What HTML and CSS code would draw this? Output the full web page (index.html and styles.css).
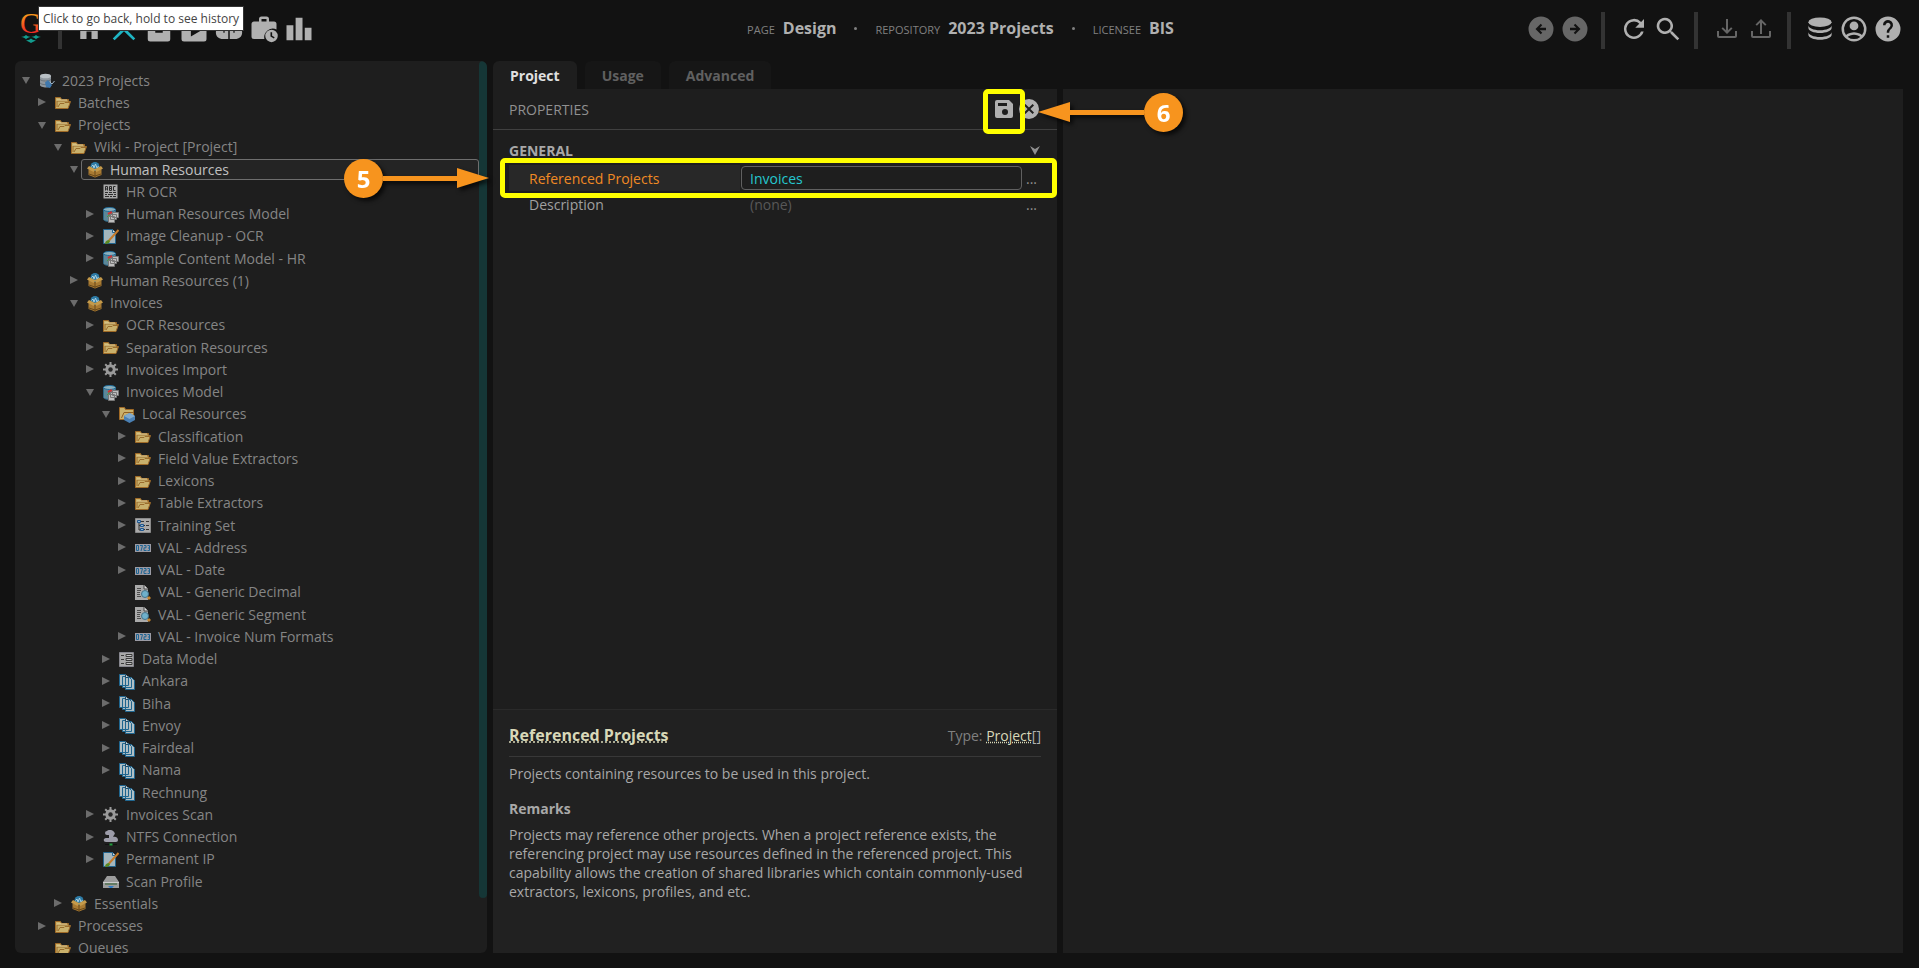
FILE: index.html
```html
<!DOCTYPE html>
<html lang="en">
<head>
  <meta charset="UTF-8">
  <title>Design - 2023 Projects</title>
  <link rel="stylesheet" href="styles.css">
</head>
<body>
  <!-- icon sprite -->
  <svg class="sprite" aria-hidden="true">
    <defs>
      <linearGradient id="logo-fill" x1="0" y1="0" x2="0" y2="1">
        <stop offset="0.2" stop-color="#f9a01b"/>
        <stop offset="0.8" stop-color="#ee2a24"/>
      </linearGradient>
    </defs>

    <!-- toolbar -->
    <symbol id="i-home" viewBox="0 0 24 24"><path d="M10 20v-6h4v6h5v-8h3L12 3 2 12h3v8z"/></symbol>
    <symbol id="i-design" viewBox="0 0 24 24"><path d="M4.500 21 3 19.500 10.500 12 3 4.500 5 3l7 7.300L19 3l2 1.500-7.500 7.500 7.500 7.500-1.500 1.500L12 13.700z"/></symbol>
    <symbol id="i-archive" viewBox="0 0 24 24"><path d="M2.500 3h19v4h-19zM3 8h18v12a2 2 0 0 1-2 2H5a2 2 0 0 1-2-2zM9 11v4h6v-4z" fill-rule="evenodd"/></symbol>
    <symbol id="i-play" viewBox="0 0 24 24"><path d="M4 5h4V2h8v3h4a2 2 0 0 1 2 2v13a2 2 0 0 1-2 2H4a2 2 0 0 1-2-2V7a2 2 0 0 1 2-2zm6-1v1h4V4zM9.500 9v9l7.500-4.500z" fill-rule="evenodd"/></symbol>
    <symbol id="i-brain" viewBox="0 0 24 24"><path d="M11.400 3v17H7c-3 0-5.500-2-5.500-5 0-1 0-1 .5-2-1-4 2-6 3-6 1-3 4-4 6.400-4zm1.200 0v17H17c3 0 5.500-2 5.500-5 0-1 0-1-.5-2 1-4-2-6-3-6-1-3-4-4-6.400-4z"/><path d="M8 12v3M16 12v3" stroke="#121212"/></symbol>
    <symbol id="i-case" viewBox="0 0 24 24"><path d="M8 4a2 2 0 0 1 2-2h4a2 2 0 0 1 2 2v2h4a2 2 0 0 1 2 2v4.300A7 7 0 0 0 12.300 20H4a2 2 0 0 1-2-2V8c0-1.100.9-2 2-2h4zm2 0v2h4V4z" fill-rule="evenodd"/><path d="M18 12.500a5 5 0 1 0 0 10 5 5 0 0 0 0-10zm-.8 2h1.300v2.800l2 1.200-.6 1-2.700-1.600z" fill-rule="evenodd"/></symbol>
    <symbol id="i-bars" viewBox="0 0 24 24"><path d="M2 9h5.500v12H2zM9.300 3h5.500v18H9.300zM16.600 11H22v10h-5.400z"/></symbol>
    <symbol id="i-back" viewBox="0 0 24 24"><path d="M12 2a10 10 0 1 0 0 20 10 10 0 0 0 0-20zm4 11H11l2 2-1.200 1.200L7.600 12l4.200-4.200L13 9l-2 2h5z" fill-rule="evenodd"/></symbol>
    <symbol id="i-forward" viewBox="0 0 24 24"><path d="M12 2a10 10 0 1 1 0 20 10 10 0 0 1 0-20zM8 13h5l-2 2 1.200 1.200 4.200-4.200-4.200-4.200L11 9l2 2H8z" fill-rule="evenodd"/></symbol>
    <symbol id="i-refresh" viewBox="0 0 24 24"><path d="M17.700 6.300A8 8 0 1 0 19.700 14h-2.100A6 6 0 1 1 12 6c1.700 0 3.100.7 4.200 1.800L13 11h7V4z"/></symbol>
    <symbol id="i-search" viewBox="0 0 24 24"><path d="M9.500 3a6.500 6.500 0 0 1 5 10.600l.2.400h.8l5.500 5.500-1.500 1.500-5.500-5.500v-.8l-.4-.2A6.500 6.500 0 1 1 9.500 3m0 2a4.500 4.500 0 1 0 0 9 4.500 4.500 0 0 0 0-9z"/></symbol>
    <symbol id="i-download" viewBox="0 0 24 24"><path d="M2 14h2v5h16v-5h2v5a2 2 0 0 1-2 2H4a2 2 0 0 1-2-2zm10 3 5.500-5.400-1.400-1.400L13 13.200V2h-2v11.200L7.900 10.200 6.500 11.600z" transform="translate(2.400 2.400) scale(.8)"/></symbol>
    <symbol id="i-upload" viewBox="0 0 24 24"><path d="M2 14h2v5h16v-5h2v5a2 2 0 0 1-2 2H4a2 2 0 0 1-2-2zM12 2l5.500 5.400-1.400 1.400L13 5.800V17h-2V5.800L7.900 8.800 6.500 7.400z" transform="translate(2.400 2.400) scale(.8)"/></symbol>
    <symbol id="i-database" viewBox="0 0 24 24"><ellipse cx="12" cy="6.500" rx="9.300" ry="3.800"/><path d="M2.700 9v2.200c0 2.200 4.200 4 9.300 4s9.300-1.800 9.300-4V9c0 2.200-4.200 4-9.300 4s-9.300-1.800-9.300-4zM2.700 14.300v2.200c0 2.200 4.200 4 9.300 4s9.300-1.800 9.300-4v-2.200c0 2.200-4.200 4-9.300 4s-9.300-1.800-9.300-4z"/></symbol>
    <symbol id="i-account" viewBox="0 0 24 24"><path d="M12 2a10 10 0 1 0 0 20 10 10 0 0 0 0-20zM7 18.300c.5-.9 3-1.800 5-1.800s4.500.9 5 1.800a8 8 0 0 1-10 0zm11.400-1.500C17 15.100 13.500 14.500 12 14.500s-5 .6-6.400 2.300a8 8 0 1 1 12.800 0zM12 6a3.500 3.500 0 1 0 0 7 3.500 3.500 0 0 0 0-7z"/></symbol>
    <symbol id="i-help" viewBox="0 0 24 24"><path d="M15.100 11.300l-.9.900c-.8.800-1.200 1.400-1.200 2.800h-2v-.5c0-1.100.4-2.100 1.200-2.800l1.200-1.300A2 2 0 1 0 10 9H8a4 4 0 1 1 7.100 2.300M13 19h-2v-2h2M12 2a10 10 0 1 0 0 20 10 10 0 0 0 0-20z" fill-rule="evenodd"/></symbol>
    <symbol id="i-save" viewBox="0 0 24 24"><path d="M15 9H6V6h9m-2 12a3 3 0 1 1 0-6 3 3 0 0 1 0 6M17 3H5a2 2 0 0 0-2 2v14a2 2 0 0 0 2 2h14a2 2 0 0 0 2-2V7z" fill-rule="evenodd"/></symbol>
    <symbol id="i-cancel" viewBox="0 0 24 24"><path d="M12 2a10 10 0 1 0 0 20 10 10 0 0 0 0-20zm5 13.600L15.600 17 12 13.400 8.400 17 7 15.600l3.600-3.600L7 8.400 8.400 7l3.600 3.600L15.600 7 17 8.400 13.400 12z" fill-rule="evenodd"/></symbol>

    <!-- tree nodes -->
    <symbol id="t-root" viewBox="0 0 16 16"><path d="M1 3v9c0 1.500 3 2.500 6 2.500s5-1 5-2.500V3z" fill="#8f979e"/><ellipse cx="6.500" cy="3" rx="5.500" ry="2.300" fill="#b9c0c5"/><path d="M1 6.500c2 2 9 2 11 0M1 10c2 2 6 2 8 1" stroke="#6b7379" fill="none"/><path d="M6 9.500 9 7l4 5-2 3-4-1z" fill="#3f78ad"/><path d="m11 9 2 2 2.500-3" stroke="#9fb4c6" fill="none"/></symbol>
    <symbol id="t-folder" viewBox="0 0 16 16"><path d="M.5 13.500v-11h5l1 2h7v2h2L13 13.500z" fill="#c9b16c" stroke="#a06a26"/><path d="M2 12V6h11M3 12l2-3.500h4l1-1h5" fill="none" stroke="#9a6c2c"/><path d="M2 5h10" stroke="#e0d09a"/></symbol>
    <symbol id="t-box" viewBox="0 0 16 16"><circle cx="8" cy="4.500" r="4.500" fill="#2d7ba6"/><path d="M4.500 4.500 6 3l1 3 1.500-4L10 6l1.500-2" stroke="#a9cfe0" fill="none"/><path d="M1.500 7 8 9l6.500-2v6L8 15.500 1.500 13z" fill="#a87a32"/><path d="M0 6.500 2 4l6 3 6-3 2 2.500L9.500 10 8 8l-1.500 2z" fill="#c59a4a"/><path d="M8 9v6.500M2 12l6 2 6-2" stroke="#6b4a1a" fill="none"/></symbol>
    <symbol id="t-abc" viewBox="0 0 16 16"><path d="M.5.500h14v14H.5z" fill="#a8a8a8"/><path d="M2.500 6.500v-4h2v4M2.500 5h2M6.500 2.500v4h2v-4zM6.500 4.500h2M12.500 2.500h-2v4h2M2 8.500h3m1 0h3m1 0h3M2 10.500h2m1 0h5m1 0h2M2 12.500h4m1 0h2m1 0h3" stroke="#2c2c2c" fill="none"/></symbol>
    <symbol id="t-model" viewBox="0 0 16 16"><path d="M.5 2.500v10c0 1 3 2 6 2s6-1 6-2v-10z" fill="#5c8798" stroke="#2b6585"/><ellipse cx="6.500" cy="2.500" rx="6" ry="2" fill="#8cb0bc" stroke="#1f6d9c"/><path d="m5 7 4-2" stroke="#c33" stroke-width="2"/><path d="M7 7.500 4 10" stroke="#4a9a3a"/><path d="M9.500 5.500h6v5h-6zM7.500 7.500h6v5h-6zM5.500 9.500h6v6h-6z" fill="#bdbdbd" stroke="#777"/></symbol>
    <symbol id="t-image" viewBox="0 0 16 16"><path d="M.5.500h9l3 3v11H.5z" fill="#a4b6bd" stroke="#22658f"/><path d="M9.500.500v3h3" fill="#ddd" stroke="#22658f"/><path d="M15.500 1 6 11.500" stroke="#c47a2a" stroke-width="2"/><path d="M2 15c0-3 2-4 4-4l1 1c0 2-2 3-5 3z" fill="#5c8a1f"/></symbol>
    <symbol id="t-gear" viewBox="0 0 16 16"><path d="M7.500 0v15M0 7.500h15M2.200 2.200l10.600 10.600M12.800 2.200 2.200 12.800" stroke="#9a9a9a" stroke-width="2"/><circle cx="7.500" cy="7.500" r="3.700" fill="none" stroke="#9a9a9a" stroke-width="3"/><circle cx="7.500" cy="7.500" r="2.200" fill="#262626"/></symbol>
    <symbol id="t-local" viewBox="0 0 16 16"><path d="M.5 12.500V.500h5l1 2h8v8l-5 2z" fill="#c9b16c" stroke="#a06a26"/><path d="M2.500 11 5 5.500h10" stroke="#8f5f25" fill="none"/><path d="m5 9 5.500-3L16 9v4l-5.500 3L5 13z" fill="#4a80b4"/><path d="m5 9 5.500 3L16 9l-5.500-3z" fill="#80aace"/></symbol>
    <symbol id="t-set" viewBox="0 0 16 16"><path d="M.5.500h15v14H.5z" fill="#a9a9a9" stroke="#8a8a8a"/><path d="M4 4v8h3M4 7.500h3M5 3.500h4m2 0h3M9 7.500h1m1 0h3M9 11.500h1m1 0h3" stroke="#333" fill="none"/><path d="M2.500 2.500h3v2h-3zM5.500 6.500h3v2h-3zM5.500 10.500h3v2h-3z" fill="#8fb4d0" stroke="#1f5790"/></symbol>
    <symbol id="t-value" viewBox="0 0 16 16"><path d="M0 4h16v8H0z" fill="#9b9ba4"/><path d="M1.500 5.500h2v5h-2zM5 5.500h2.500L6 11M9 5.500h2v2.300H9v2.700h2.500M12.500 5.500h2v5h-2M13 8h1.500" stroke="#1d6594" fill="none"/></symbol>
    <symbol id="t-find" viewBox="0 0 16 16"><path d="M0 0h9l4 4v11H0z" fill="#aaa"/><path d="M9 0v4h4" fill="#ddd" stroke="#444"/><path d="M2 3.500h4M2 5.500h4M2 7.500h3M2 9.500h3M2 11.500h4" stroke="#4c4c4c"/><circle cx="10" cy="9" r="3.500" fill="#6fb0cb" stroke="#46748a"/><path d="m13 12 2 2" stroke="#c4842d" stroke-width="3"/></symbol>
    <symbol id="t-data" viewBox="0 0 16 16"><path d="M.5.500h14v14H.5z" fill="#a8a8a8" stroke="#86868e"/><path d="M2 3.500h3M2 7.500h3M2 11.500h3M7 2.500h6v2H7zM7 6.500h6v2H7zM7 10.500h6v2H7z" stroke="#3a3a3a" fill="#c2c2c2"/></symbol>
    <symbol id="t-docs" viewBox="0 0 16 16"><path d="M6.500 3.500h6l3 3v9h-9zM3.500 2.500h6l3 3v8h-9zM.5.500h6l3 3v8h-9z" fill="#b0bfc5" stroke="#1f6690"/><path d="M6.500.500v3h3" fill="#ddd" stroke="#1f4a66"/></symbol>
    <symbol id="t-cloud" viewBox="0 0 16 16"><path d="M4 5a2 2 0 0 1 0-4c2-2 6-1 7 1a2 2 0 0 1 0 3l-1 2c3-1 5 1 5 3s-2 2-3 2H3c-3 0-3-4 0-4h3V5z" fill="#9d9daa"/><path d="M2 14.500h12" stroke="#111"/><path d="M6.500 13.500h3v2h-3z" fill="#1f9a3a"/></symbol>
    <symbol id="t-scan" viewBox="0 0 16 16"><path d="M4 2h8l4 6v6H0V8z" fill="#9c9c9c"/><path d="M0 8.500h16" stroke="#ccc"/><path d="M2 10h12" stroke="#2b5c2b"/><path d="M5 12h6l-2 2H7z" fill="#2f7bc4"/></symbol>
  </svg>

  <header class="topbar">
    <nav class="topbar-left">
      <a href="#" class="logo" aria-label="Home">
        <svg width="22" height="32" viewBox="0 0 22 32">
          <text x="0" y="20" class="logo-letter">G</text>
          <path d="M1 24q4-.5 5-2 1 1.500 5 2-4 .5-5 2.500-1-2-5-2.500zm10 0q4-.5 5-2 1 1.500 5 2-4 .5-5 2.500-1-2-5-2.500zm-5 3.500q4-.5 5-2 1 1.500 5 2-3 1-5 2.500-2-1.500-5-2.500z" fill="#129b8d"/>
        </svg>
      </a>
      <span class="sep"></span>
      <button class="tool" aria-label="Home"><svg><use href="#i-home"/></svg></button>
      <button class="tool active" aria-label="Design"><svg><use href="#i-design"/></svg></button>
      <button class="tool" aria-label="Batches"><svg><use href="#i-archive"/></svg></button>
      <button class="tool" aria-label="Tasks"><svg><use href="#i-play"/></svg></button>
      <button class="tool" aria-label="Learning"><svg><use href="#i-brain"/></svg></button>
      <button class="tool" aria-label="Jobs"><svg><use href="#i-case"/></svg></button>
      <button class="tool" aria-label="Stats"><svg><use href="#i-bars"/></svg></button>
    </nav>
    <div class="crumbs">
      <span class="crumb"><small>PAGE</small> <b>Design</b></span>
      <i class="dot"></i>
      <span class="crumb"><small>REPOSITORY</small> <b>2023 Projects</b></span>
      <i class="dot"></i>
      <span class="crumb"><small>LICENSEE</small> <b>BIS</b></span>
    </div>
    <div class="topbar-right">
      <button class="tool dim" aria-label="Back"><svg><use href="#i-back"/></svg></button>
      <button class="tool dim" aria-label="Forward"><svg><use href="#i-forward"/></svg></button>
      <span class="sep"></span>
      <button class="tool" aria-label="Refresh"><svg><use href="#i-refresh"/></svg></button>
      <button class="tool" aria-label="Search"><svg><use href="#i-search"/></svg></button>
      <span class="sep"></span>
      <button class="tool dim" aria-label="Download"><svg><use href="#i-download"/></svg></button>
      <button class="tool dim" aria-label="Upload"><svg><use href="#i-upload"/></svg></button>
      <span class="sep"></span>
      <button class="tool" aria-label="Repository"><svg><use href="#i-database"/></svg></button>
      <button class="tool" aria-label="Account"><svg><use href="#i-account"/></svg></button>
      <button class="tool" aria-label="Help"><svg><use href="#i-help"/></svg></button>
    </div>
    <div class="tooltip">Click to go back, hold to see history</div>
  </header>

  <main class="workspace">
    <aside class="tree-panel">
      <div class="tree" id="tree"></div>
      <div class="scrollbar"></div>
    </aside>

    <section class="editor">
      <div class="tabs">
        <button class="tab selected">Project</button>
        <button class="tab">Usage</button>
        <button class="tab">Advanced</button>
      </div>

      <div class="editor-body">
        <div class="props-header">
          <span>PROPERTIES</span>
          <div class="props-actions">
            <div class="save-wrap">
              <button class="action" aria-label="Save"><svg width="24" height="24"><use href="#i-save"/></svg></button>
              <div class="highlight highlight-save"></div>
              <div class="callout callout-right">
                <svg class="arrow-head" width="32" height="20" viewBox="0 0 32 20"><path d="M0 10 32 0v20z"/></svg>
                <span class="arrow-line"></span>
                <span class="step">6</span>
              </div>
            </div>
            <button class="action" aria-label="Cancel"><svg width="24" height="24"><use href="#i-cancel"/></svg></button>
          </div>
        </div>

        <div class="props">
          <div class="prop-group">
            <b>GENERAL</b>
            <svg width="10" height="9" viewBox="0 0 10 9"><path d="M0 0l5 3 5-3-5 9z"/></svg>
          </div>
          <div class="prop current">
            <label class="prop-name" for="refs">Referenced Projects</label>
            <input class="prop-value" id="refs" type="text" value="Invoices">
            <button class="more" aria-label="Edit references">...</button>
            <div class="highlight highlight-row"></div>
            <div class="callout callout-left">
              <span class="step">5</span>
              <span class="arrow-line"></span>
              <svg class="arrow-head" width="32" height="20" viewBox="0 0 32 20"><path d="M32 10 0 0v20z"/></svg>
            </div>
          </div>
          <div class="prop">
            <label class="prop-name" for="desc">Description</label>
            <input class="prop-value" id="desc" type="text" placeholder="(none)">
            <button class="more" aria-label="Edit description">...</button>
          </div>
        </div>

        <div class="help">
          <div class="help-header">
            <h2><a href="#">Referenced Projects</a></h2>
            <span class="help-type">Type: <a href="#">Project</a><em>[]</em></span>
          </div>
          <p>Projects containing resources to be used in this project.</p>
          <h3>Remarks</h3>
          <p>Projects may reference other projects. When a project reference exists, the referencing project may use resources defined in the referenced project. This capability allows the creation of shared libraries which contain commonly-used extractors, lexicons, profiles, and etc.</p>
        </div>
      </div>
    </section>

    <section class="viewer"></section>
  </main>

  <script src="tree.js"></script>
</body>
</html>
```

FILE: styles.css
```css
* {
  box-sizing: border-box;
}
body {
  margin: 0;
  height: 100vh;
  display: flex;
  flex-direction: column;
  overflow: hidden;
  background: #121212;
  color: #a0a0a0;
  font-family: 'Open Sans', 'Noto Sans', sans-serif;
  font-size: 14px;
}
button {
  padding: 0;
  border: 0;
  background: none;
  color: inherit;
  font: inherit;
}
.sprite {
  position: absolute;
  width: 0;
  height: 0;
}

/* top bar */
.topbar {
  position: relative;
  display: grid;
  grid-template-columns: 1fr auto 1fr;
  align-items: center;
  height: 58px;
  margin-bottom: 3px;
  padding: 0 16px 0 20px;
}
.topbar-left,
.topbar-right {
  display: flex;
  align-items: center;
  gap: 5px;
}
.topbar-right {
  justify-content: flex-end;
  gap: 4px;
}
.logo {
  display: flex;
}
.logo svg {
  overflow: visible;
}
.logo-letter {
  font: 29px 'Liberation Serif', serif;
  fill: url(#logo-fill);
}
.sep {
  width: 4px;
  height: 37px;
  margin: 2px 10px 0 7px;
  background: #333;
}
.topbar-left .sep {
  margin: 2px 7px 0 11px;
}
.tool {
  width: 30px;
  height: 30px;
  color: #b0b0b0;
}
.tool svg {
  display: block;
  width: 30px;
  height: 30px;
  fill: currentColor;
}
.tool.active {
  color: #1fb5c4;
}
.tool.dim {
  color: #666;
}
.crumbs {
  display: flex;
  align-items: center;
  gap: 18px;
  padding: 0 2px 2px 0;
}
.crumb {
  display: flex;
  align-items: baseline;
  gap: 8px;
}
.crumb small {
  font-size: 11px;
  color: #808080;
}
.crumb b {
  font-size: 16px;
  color: #b0b0b0;
}
.dot {
  width: 3px;
  height: 3px;
  border-radius: 50%;
  background: #808080;
}
.tooltip {
  position: absolute;
  left: 38px;
  top: 6px;
  padding: 0 4px;
  border: 1px solid #333;
  background: #fff;
  color: #444;
  font-size: 12px;
  line-height: 23px;
  white-space: nowrap;
}

/* layout */
.workspace {
  flex: 1;
  min-height: 0;
  display: grid;
  grid-template-columns: 472px 564px 1fr;
  gap: 6px;
  padding: 0 16px 15px 15px;
}

/* tree */
.tree-panel {
  display: flex;
  min-height: 0;
  overflow: hidden;
  border-radius: 6px;
  background: #1e1e1e;
}
.tree {
  flex: 1;
  display: grid;
  grid-auto-rows: 1fr;
  height: 890px;
  padding-left: 4px;
  margin-top: 8px;
}
.scrollbar {
  width: 8px;
  height: 837px;
  border-radius: 4px;
  background: #153636;
}
.row {
  display: flex;
  align-items: center;
  color: #858585;
}
.toggle {
  flex: none;
  width: 14px;
  height: 16px;
}
.toggle svg {
  display: block;
  margin: 4px auto;
  fill: #6c6c6c;
}
.node {
  flex: 1;
  display: flex;
  align-items: center;
  gap: 7px;
  height: 21px;
  padding-left: 5px;
  border: 1px solid transparent;
  border-radius: 3px;
}
.node svg {
  flex: none;
  margin-top: 2px;
}
.node.selected {
  border-color: #6e6e6e;
  background: #242424;
  color: #c0c0c0;
}

/* editor */
.editor {
  display: flex;
  flex-direction: column;
  min-height: 0;
}
.tabs {
  display: flex;
  gap: 8px;
}
.tab {
  height: 28px;
  padding: 0 17px;
  border-radius: 6px 6px 0 0;
  background: #161616;
  color: #606060;
  font-weight: 700;
}
.tab.selected {
  background: #1e1e1e;
  color: #e0e0e0;
}
.editor-body {
  flex: 1;
  display: flex;
  flex-direction: column;
  background: #1e1e1e;
}
.props-header {
  display: flex;
  align-items: center;
  justify-content: space-between;
  height: 41px;
  padding: 0 16px;
  border-bottom: 1px solid #404040;
  color: #909090;
}
.props-actions {
  display: flex;
  gap: 1px;
  color: #b0b0b0;
}
.save-wrap {
  position: relative;
  display: flex;
}
.action svg {
  display: block;
  fill: currentColor;
}
.props {
  flex: 1;
  padding: 8px 16px;
}
.prop-group {
  display: flex;
  align-items: center;
  justify-content: space-between;
  height: 25px;
  margin-bottom: 2px;
}
.prop-group b {
  color: #a8a8a8;
}
.prop-group svg {
  margin-right: 1px;
  fill: #909090;
}
.prop {
  position: relative;
  display: grid;
  grid-template-columns: 231px 1fr 19px;
  align-items: center;
  height: 26px;
}
.prop-name {
  padding: 1px 0 0 20px;
  line-height: 25px;
}
.prop-value {
  min-width: 0;
  height: 24px;
  margin-left: 1px;
  padding: 0 8px;
  border: 1px solid transparent;
  border-radius: 4px;
  background: none;
  color: #25c6cf;
  font: inherit;
}
.prop-value::placeholder {
  color: #585858;
}
.prop.current .prop-name {
  background: #282828;
  color: #f08a24;
}
.prop.current .prop-value {
  border-color: #606060;
}
.more {
  color: #909090;
}

/* help text */
.help {
  height: 244px;
  padding: 0 16px;
  border-top: 1px solid #2a2a2a;
  background: #212121;
  line-height: 19px;
  color: #a8a8a8;
}
.help-header {
  display: flex;
  align-items: center;
  justify-content: space-between;
  height: 47px;
  padding-top: 5px;
  border-bottom: 1px solid #383838;
}
.help h2 {
  margin: 0;
  font-size: 16px;
}
.help a {
  color: #d8d8b8;
  text-decoration: underline dotted;
}
.help-type {
  color: #808080;
}
.help-type em {
  font-style: normal;
  color: #b0b0b0;
}
.help p {
  margin: 7px 0 16px;
}
.help h3 {
  margin: 0;
  font-size: 14px;
}
.viewer {
  margin-top: 28px;
  background: #1e1e1e;
}

/* walkthrough marks */
.highlight {
  position: absolute;
  border: 5px solid #ff0;
  border-radius: 5px;
  pointer-events: none;
}
.highlight-save {
  inset: -8px -9px -13px;
}
.highlight-row {
  inset: -7px -16px -7px -9px;
}
.callout {
  position: absolute;
  display: flex;
  align-items: center;
  height: 40px;
  filter: drop-shadow(3px 3px 2px rgba(0,0,0,0.7));
}
.callout-left {
  right: 100%;
  top: -7px;
  margin-right: 20px;
}
.callout-right {
  left: 100%;
  top: -5px;
  margin-left: 22px;
}
.step {
  width: 39px;
  height: 39px;
  border-radius: 50%;
  background: #f7941e;
  color: #fff;
  font-size: 24px;
  font-weight: 700;
  line-height: 39px;
  text-align: center;
}
.arrow-line {
  width: 74px;
  height: 5px;
  background: #f7941e;
}
.arrow-head {
  fill: #f7941e;
}
```

FILE: tree.js
```js
// [level, state, icon, label]  state: o = open, c = closed, - = no children
const nodes = [
  [0, 'o', 'root', '2023 Projects'],
  [1, 'c', 'folder', 'Batches'],
  [1, 'o', 'folder', 'Projects'],
  [2, 'o', 'folder', 'Wiki - Project [Project]'],
  [3, 'o', 'box', 'Human Resources'],
  [4, '-', 'abc', 'HR OCR'],
  [4, 'c', 'model', 'Human Resources Model'],
  [4, 'c', 'image', 'Image Cleanup - OCR'],
  [4, 'c', 'model', 'Sample Content Model - HR'],
  [3, 'c', 'box', 'Human Resources (1)'],
  [3, 'o', 'box', 'Invoices'],
  [4, 'c', 'folder', 'OCR Resources'],
  [4, 'c', 'folder', 'Separation Resources'],
  [4, 'c', 'gear', 'Invoices Import'],
  [4, 'o', 'model', 'Invoices Model'],
  [5, 'o', 'local', 'Local Resources'],
  [6, 'c', 'folder', 'Classification'],
  [6, 'c', 'folder', 'Field Value Extractors'],
  [6, 'c', 'folder', 'Lexicons'],
  [6, 'c', 'folder', 'Table Extractors'],
  [6, 'c', 'set', 'Training Set'],
  [6, 'c', 'value', 'VAL - Address'],
  [6, 'c', 'value', 'VAL - Date'],
  [6, '-', 'find', 'VAL - Generic Decimal'],
  [6, '-', 'find', 'VAL - Generic Segment'],
  [6, 'c', 'value', 'VAL - Invoice Num Formats'],
  [5, 'c', 'data', 'Data Model'],
  [5, 'c', 'docs', 'Ankara'],
  [5, 'c', 'docs', 'Biha'],
  [5, 'c', 'docs', 'Envoy'],
  [5, 'c', 'docs', 'Fairdeal'],
  [5, 'c', 'docs', 'Nama'],
  [5, '-', 'docs', 'Rechnung'],
  [4, 'c', 'gear', 'Invoices Scan'],
  [4, 'c', 'cloud', 'NTFS Connection'],
  [4, 'c', 'image', 'Permanent IP'],
  [4, '-', 'scan', 'Scan Profile'],
  [2, 'c', 'box', 'Essentials'],
  [1, 'c', 'folder', 'Processes'],
  [1, '-', 'folder', 'Queues']
];

const selected = 'Human Resources';
const indent = 16;

const arrows = {
  o: '<svg width="8" height="8" viewBox="0 0 8 8"><path d="M0 1h8L4 8z"/></svg>',
  c: '<svg width="8" height="8" viewBox="0 0 8 8"><path d="M0 0l8 4-8 4z"/></svg>'
};

function createRow([level, state, icon, label]) {
  const row = document.createElement('div');
  row.className = 'row';
  row.style.paddingLeft = `${level * indent}px`;

  const toggle = arrows[state]
    ? `<button class="toggle" aria-label="Toggle ${label}">${arrows[state]}</button>`
    : '<span class="toggle"></span>';

  row.innerHTML = `${toggle}
    <div class="node${label === selected ? ' selected' : ''}">
      <svg width="16" height="16"><use href="#t-${icon}"/></svg>
      <span>${label}</span>
    </div>`;
  return row;
}

const tree = document.getElementById('tree');
nodes.forEach(node => tree.appendChild(createRow(node)));
```
